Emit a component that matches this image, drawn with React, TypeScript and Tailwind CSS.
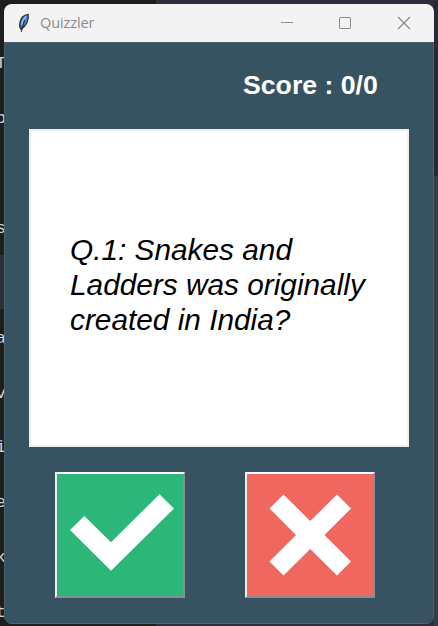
const editorLines = ['T', 'b', '', 's', '', 'ra', 'ov', 'i', 'e', 'k', 't'];

function Feather() {
  return (
    <svg width="14" height="20" viewBox="0 0 14 20">
      <path d="M4 17.5 L2 14 Q1.5 8 5 3.5 Q8 0.8 11.8 0.8 Q12.8 5 10.5 10 Q8.5 14 5.2 16 Z" fill="#34373b" />
      <path d="M3.6 14.5 Q2.8 9 6 4.8 Q8 2.3 10.6 2 Q11.3 6 8.8 10.5 Q6.8 14 3.6 14.5Z" fill="#4484cf" />
      <path d="M4.6 12 Q5.3 7 9 3.5" stroke="#9cc2ec" strokeWidth="1.4" fill="none" />
      <path d="M7.6 7 L4.2 19" stroke="#25282c" strokeWidth="1" />
    </svg>
  );
}

function TitleBar() {
  return (
    <header className="flex h-[38px] shrink-0 items-center bg-[#f3f3f3] pl-[13px] text-[#8b8b8b]">
      <Feather />
      <h1 className="ml-[9px] font-['Open_Sans','Noto_Sans',sans-serif] text-[14.5px] leading-5 tracking-[-0.1px]">Quizzler</h1>
      <div className="ml-auto flex h-full items-center pr-[23px]">
        <button aria-label="Minimize" className="mr-[44px]">
          <svg className="block" width="14" height="14" viewBox="0 0 14 14"><path d="M1 6.5h12" stroke="#919191" /></svg>
        </button>
        <button aria-label="Maximize" className="mr-[45px]">
          <svg className="block" width="14" height="14" viewBox="0 0 14 14"><rect x="1.5" y="1.5" width="11" height="11" rx="0.6" fill="none" stroke="#8b8b8b" /></svg>
        </button>
        <button aria-label="Close">
          <svg className="block" width="14" height="14" viewBox="0 0 14 14"><path d="M1 1l12 12M13 1L1 13" stroke="#858585" strokeWidth="1.1" /></svg>
        </button>
      </div>
    </header>
  );
}

const answerButton =
  'h-[126px] w-[130px] border-2 border-t-white border-l-[#eeeeee] border-r-[#8d8d8d] border-b-[#8d8d8d]';

export default function App() {
  return (
    <div className="flex h-[626px] w-[438px] overflow-hidden bg-[linear-gradient(90deg,#1e1e20_0_156px,#2f2d3b_156px)]">
      <aside className="flex h-full w-1 shrink-0 flex-col overflow-hidden bg-[#1e1e1e] pt-[35px] font-['Liberation_Mono',monospace] text-[17px] text-[#cfd3da]">
        {editorLines.map((line, index) => (
          <div
            key={index}
            className={`flex h-[54.9px] w-1 shrink-0 items-center justify-end overflow-hidden pt-[3px] ${index === 4 ? 'bg-[#302e3c]' : ''}`}
          >
            <span className="-mr-[2px]">{line}</span>
          </div>
        ))}
      </aside>
      <div className="flex h-full w-[430px] shrink-0 flex-col pt-1">
        <main className="flex h-[620px] flex-col overflow-hidden rounded-lg bg-[#375362]">
          <TitleBar />
          <div className="flex grow flex-col border-x border-b border-t border-b-[#56646d] border-l-[#49616b] border-r-[#56606a] border-t-[#46616f]">
            <p className="mt-[27px] ml-[238px] font-['Liberation_Sans',Arial,sans-serif] text-[26.67px] leading-[30px] font-bold text-white">
              Score : 0/0
            </p>
            <section className="mt-[29px] ml-6 flex h-[318px] w-[380px] items-center border-2 border-[#eeeeee] bg-white pb-[7px] pl-[39px]">
              <p className="font-['Liberation_Sans',Arial,sans-serif] text-[29.8px] leading-[35px] text-black italic">
                Q.1: Snakes and
                <br />
                Ladders was originally
                <br />
                created in India?
              </p>
            </section>
            <div className="mt-[25px] ml-[50px] flex gap-[60px]">
              <button aria-label="True" className={`${answerButton} bg-[#2cb67a]`}>
                <svg className="block" width="126" height="122" viewBox="0 0 126 122">
                  <path d="M13 56L27.3 42L54 68.3L102.5 20.2L117 34.5L54 96.7Z" fill="white" />
                </svg>
              </button>
              <button aria-label="False" className={`${answerButton} bg-[#ef675f]`}>
                <svg className="block" width="126" height="122" viewBox="0 0 126 122">
                  <path d="M22.5 34.5L36.5 20.5L63.2 47L90 20.5L104 34.5L77.5 61L104 87.5L90 101.5L63.2 75L36.5 101.5L22.5 87.5L49 61Z" fill="white" />
                </svg>
              </button>
            </div>
          </div>
        </main>
      </div>
      <div className="flex w-1 shrink-0 flex-col">
        <div className="h-[175px] bg-[#2b2937]" />
        <div className="grow border-t border-[#25232f] bg-[#3a3b49]" />
      </div>
    </div>
  );
}
